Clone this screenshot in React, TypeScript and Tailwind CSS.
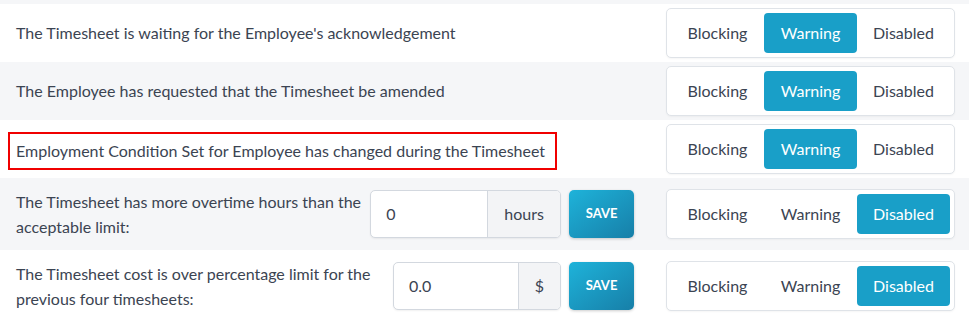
import React from "react";

const OPTIONS = ["Blocking", "Warning", "Disabled"] as const;
type Level = (typeof OPTIONS)[number];

function Segmented({ value }: { value: Level }) {
  return (
    <div className="flex w-[289px] shrink-0 rounded-[5px] border border-[#dfe3e8] bg-white p-1 shadow-[0_1px_2px_rgba(0,0,0,0.04)]">
      {OPTIONS.map((o) => (
        <button
          key={o}
          className={`h-[40px] w-[93px] rounded-[4px] text-[16px] ${o === value ? "bg-[#199fc8] text-white" : "text-[#3b4452]"}`}
        >
          {o}
        </button>
      ))}
    </div>
  );
}

function LimitInput({ value, unit, inputW, unitW }: { value: string; unit: string; inputW: string; unitW: string }) {
  return (
    <div className="flex items-center">
      <div className="flex h-[48px] overflow-hidden rounded-[5px] border border-[#d3d8df] bg-white shadow-[0_1px_2px_rgba(0,0,0,0.06)]">
        <div className={`flex items-center pl-[15px] text-[16px] text-[#3b4452] ${inputW}`}>{value}</div>
        <div className={`flex items-center justify-center border-l border-[#d3d8df] bg-[#f3f4f6] text-[16px] text-[#3b4452] ${unitW}`}>{unit}</div>
      </div>
      <button className="ml-2 h-[48px] w-[65px] rounded-[5px] bg-gradient-to-br from-[#1eb3da] to-[#177fa8] text-[13px] font-bold text-white shadow-[0_1px_3px_rgba(0,0,0,0.2)]">
        SAVE
      </button>
    </div>
  );
}

export default function App() {
  return (
    <div className="w-[969px] bg-[#f5f6f8] pt-1 pb-px font-['Lato',sans-serif] text-[16px] text-[#3b4452]">
      <div className="flex h-[58px] items-center bg-white pl-4 pr-[14px]">
        <p className="flex-1">The Timesheet is waiting for the Employee's acknowledgement</p>
        <Segmented value="Warning" />
      </div>
      <div className="flex h-[58px] items-center bg-[#f5f6f8] pl-4 pr-[14px]">
        <p className="flex-1">The Employee has requested that the Timesheet be amended</p>
        <Segmented value="Warning" />
      </div>
      <div className="flex h-[58px] items-center bg-white pl-2 pr-[14px]">
        <div className="flex-1">
          <span className="mt-[3px] inline-block border-2 border-[#f00000] py-[8px] pl-[6px] pr-[10px] leading-[18px]">
            Employment Condition Set for Employee has changed during the Timesheet
          </span>
        </div>
        <Segmented value="Warning" />
      </div>
      <div className="flex h-[72px] items-center bg-[#f5f6f8] pl-4 pr-[14px]">
        <p className="w-[356px] leading-[25px]">The Timesheet has more overtime hours than the acceptable limit:</p>
        <div className="flex-1" />
        <LimitInput value="0" unit="hours" inputW="w-[116px]" unitW="w-[73px]" />
        <div className="w-8" />
        <Segmented value="Disabled" />
      </div>
      <div className="flex h-[71px] items-center bg-white pl-4 pr-[14px]">
        <p className="w-[370px] leading-[25px]">The Timesheet cost is over percentage limit for the previous four timesheets:</p>
        <div className="flex-1" />
        <LimitInput value="0.0" unit="$" inputW="w-[124px]" unitW="w-[42px]" />
        <div className="w-8" />
        <Segmented value="Disabled" />
      </div>
    </div>
  );
}
